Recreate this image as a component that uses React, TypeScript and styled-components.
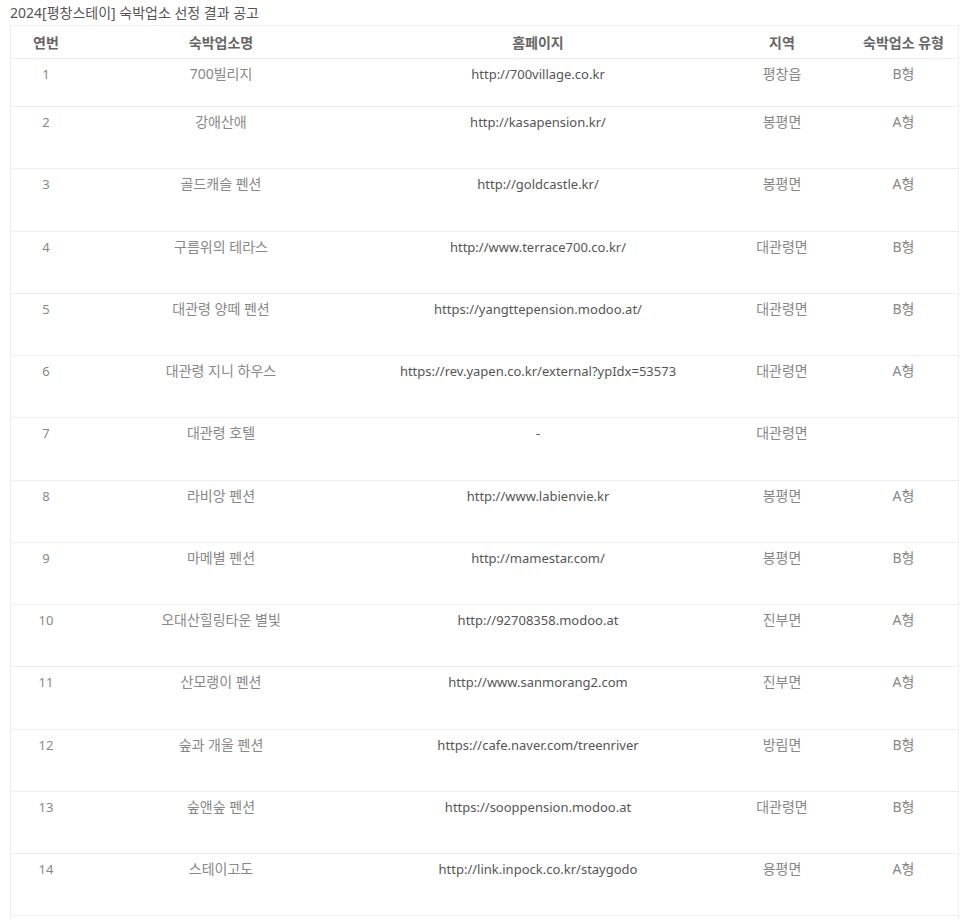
import * as React from 'react';
import styled, { createGlobalStyle } from 'styled-components';

const GlobalStyle = createGlobalStyle`
    body {
        margin: 0;
        background: #fff;
        font-family: "Noto Sans", "Noto Sans CJK KR", sans-serif;
    }
`

const Page = styled.div`
    padding: 3px 9px 0 10px;
`

const Title = styled.div`
    font-size: 14px;
    line-height: 20px;
    color: #555;
    margin-bottom: 2px;
`

const Table = styled.table`
    width: 947px;
    border-collapse: collapse;
    table-layout: fixed;
    border: 1px solid #eee;
    font-size: 13px;
`

const HeadCell = styled.th<{ $w: number }>`
    width: ${p => p.$w}px;
    height: 32px;
    padding: 0;
    font-size: 14px;
    font-weight: 600;
    color: #666;
    text-align: center;
    vertical-align: middle;
    border-bottom: 1px solid #eee;
`

const Row = styled.tr<{ $short?: boolean }>`
    height: ${p => (p.$short ? 48 : 62.25)}px;
    border-bottom: 1px solid #eee;
`

// $ko: Korean text cells run a touch larger than the Latin ones
const Cell = styled.td<{ $dark?: boolean; $ko?: boolean }>`
    padding: 5px 0 0;
    vertical-align: top;
    text-align: center;
    line-height: 20px;
    font-size: ${p => (p.$ko ? 14 : 13)}px;
    color: ${p => (p.$dark ? '#555' : '#888')};
`

interface Stay {
    name: string;
    url: string;
    area: string;
    kind: string;
}

const stays: Stay[] = [
    { name: '700빌리지', url: 'http://700village.co.kr', area: '평창읍', kind: 'B형' },
    { name: '강애산애', url: 'http://kasapension.kr/', area: '봉평면', kind: 'A형' },
    { name: '골드캐슬 펜션', url: 'http://goldcastle.kr/', area: '봉평면', kind: 'A형' },
    { name: '구름위의 테라스', url: 'http://www.terrace700.co.kr/', area: '대관령면', kind: 'B형' },
    { name: '대관령 양떼 펜션', url: 'https://yangttepension.modoo.at/', area: '대관령면', kind: 'B형' },
    { name: '대관령 지니 하우스', url: 'https://rev.yapen.co.kr/external?ypIdx=53573', area: '대관령면', kind: 'A형' },
    { name: '대관령 호텔', url: '-', area: '대관령면', kind: '' },
    { name: '라비앙 펜션', url: 'http://www.labienvie.kr', area: '봉평면', kind: 'A형' },
    { name: '마메별 펜션', url: 'http://mamestar.com/', area: '봉평면', kind: 'B형' },
    { name: '오대산힐링타운 별빛', url: 'http://92708358.modoo.at', area: '진부면', kind: 'A형' },
    { name: '산모랭이 펜션', url: 'http://www.sanmorang2.com', area: '진부면', kind: 'A형' },
    { name: '숲과 개울 펜션', url: 'https://cafe.naver.com/treenriver', area: '방림면', kind: 'B형' },
    { name: '숲앤숲 펜션', url: 'https://sooppension.modoo.at', area: '대관령면', kind: 'B형' },
    { name: '스테이고도', url: 'http://link.inpock.co.kr/staygodo', area: '용평면', kind: 'A형' },
    { name: '', url: '', area: '', kind: '' },
]

export default function App() {
    return (
        <Page>
            <GlobalStyle />
            <Title>2024[평창스테이] 숙박업소 선정 결과 공고</Title>
            <Table>
                <thead>
                    <tr>
                        <HeadCell $w={70}>연번</HeadCell>
                        <HeadCell $w={280}>숙박업소명</HeadCell>
                        <HeadCell $w={354}>홈페이지</HeadCell>
                        <HeadCell $w={134}>지역</HeadCell>
                        <HeadCell $w={109}>숙박업소 유형</HeadCell>
                    </tr>
                </thead>
                <tbody>
                    {stays.map((s, i) => (
                        <Row key={i} $short={i === 0}>
                            <Cell>{s.name ? i + 1 : ''}</Cell>
                            <Cell $ko>{s.name}</Cell>
                            <Cell $dark>{s.url}</Cell>
                            <Cell $ko>{s.area}</Cell>
                            <Cell $ko>{s.kind}</Cell>
                        </Row>
                    ))}
                </tbody>
            </Table>
        </Page>
    )
}
